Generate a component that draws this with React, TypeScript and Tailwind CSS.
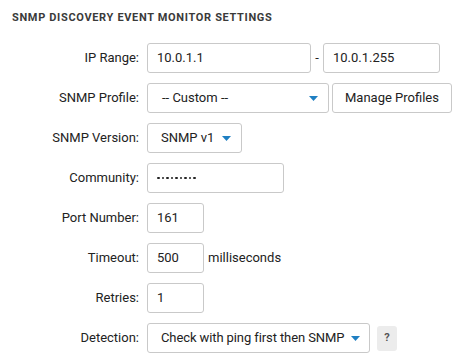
const Caret = () => (
  <svg width="9" height="5" viewBox="0 0 9 5" className="shrink-0">
    <path d="M0 0h9L4.5 5z" fill="#1f7fc2" />
  </svg>
);

const field = "h-[30px] border border-[#c9c9c9] rounded-[3px] bg-white flex items-center text-[13px] text-[#222] whitespace-nowrap";

function Row({ label, children }: { label: string; children: React.ReactNode }) {
  return (
    <div className="flex items-center h-[30px]">
      <div className="w-[140px] text-right pr-[1px] text-[13px] text-[#222] whitespace-nowrap">{label}</div>
      <div className="ml-[7px] flex items-center">{children}</div>
    </div>
  );
}

export default function App() {
  return (
    <div className="w-[467px] h-[357px] bg-white pt-[10px] pl-[12px]" style={{ fontFamily: 'Roboto, "Liberation Sans", sans-serif' }}>
      <h2 className="text-[11px] font-bold tracking-[0.06em] text-[#3a3a3a] leading-[16px]">SNMP DISCOVERY EVENT MONITOR SETTINGS</h2>
      <div className="mt-[17px] -ml-[12px] flex flex-col gap-[10px]">
        <Row label="IP Range:">
          <div className={`${field} w-[164px] pl-[9px]`}>10.0.1.1</div>
          <span className="w-[12px] text-center text-[13px] text-[#222]">-</span>
          <div className={`${field} w-[117px] pl-[9px]`}>10.0.1.255</div>
        </Row>
        <Row label="SNMP Profile:">
          <div className={`${field} w-[182px] pl-[14px] pr-[10px] justify-between`}>
            <span>-- Custom --</span>
            <Caret />
          </div>
          <div className={`${field} ml-[3px] w-[120px] justify-center`}>Manage Profiles</div>
        </Row>
        <Row label="SNMP Version:">
          <div className={`${field} w-[95px] pl-[13px] pr-[10px] justify-between`}>
            <span>SNMP v1</span>
            <Caret />
          </div>
        </Row>
        <Row label="Community:">
          <div className={`${field} w-[137px] pl-[9px]`}>
            <span className="flex gap-[2px]">
              {Array.from({ length: 9 }).map((_, i) => (
                <span key={i} className="w-[2.5px] h-[2.5px] rounded-full bg-[#222]" />
              ))}
            </span>
          </div>
        </Row>
        <Row label="Port Number:">
          <div className={`${field} w-[57px] pl-[9px]`}>161</div>
        </Row>
        <Row label="Timeout:">
          <div className={`${field} w-[57px] pl-[9px]`}>500</div>
          <span className="ml-[4px] text-[13px] text-[#222]">milliseconds</span>
        </Row>
        <Row label="Retries:">
          <div className={`${field} w-[57px] pl-[9px]`}>1</div>
        </Row>
        <Row label="Detection:">
          <div className={`${field} w-[223px] pl-[13px] pr-[9px] justify-between`}>
            <span className="tracking-[-0.1px]">Check with ping first then SNMP</span>
            <Caret />
          </div>
          <div className="ml-[7px] w-[20px] h-[25px] rounded-[3px] bg-[#ececec] flex items-center justify-center text-[11px] font-bold text-[#555]">?</div>
        </Row>
      </div>
    </div>
  );
}
